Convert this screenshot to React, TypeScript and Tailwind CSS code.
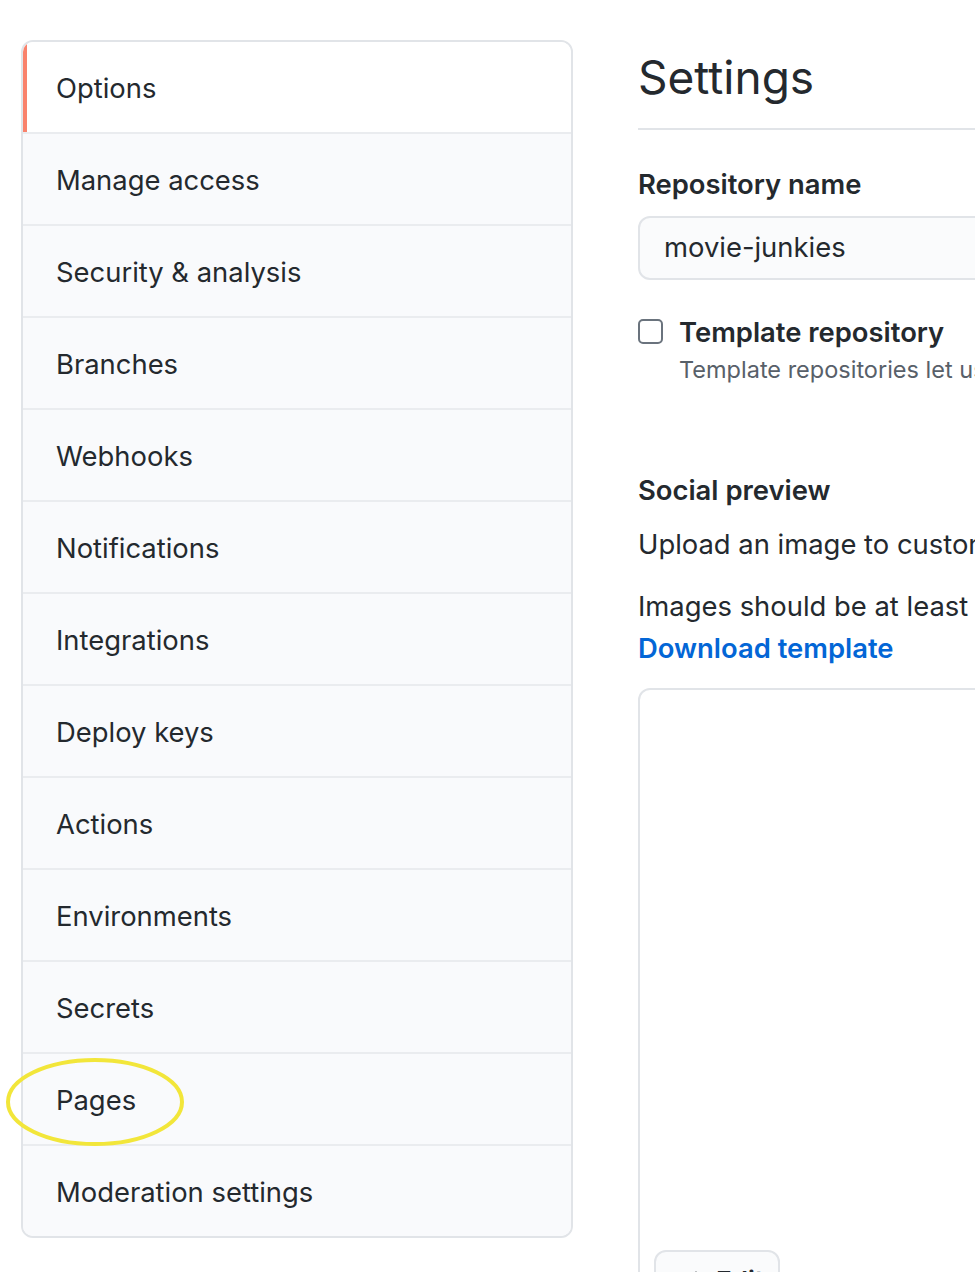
const items = [
  "Options",
  "Manage access",
  "Security & analysis",
  "Branches",
  "Webhooks",
  "Notifications",
  "Integrations",
  "Deploy keys",
  "Actions",
  "Environments",
  "Secrets",
  "Pages",
  "Moderation settings",
];

export default function App() {
  return (
    <div
      className="relative h-[1272px] w-[975px] overflow-hidden bg-white text-[#24292e]"
      style={{ fontFamily: "Inter, 'Liberation Sans', sans-serif" }}
    >
      <div className="flex items-start gap-[65px] pl-[21px] pt-[40px]">
        {/* Sidebar menu */}
        <nav className="w-[552px] shrink-0 overflow-hidden rounded-[12px] border-2 border-[#e1e4e8]">
          {items.map((label, i) => (
            <div
              key={label}
              className={
                i === 0
                  ? "relative flex h-[90px] items-center bg-white pl-[33px] pt-[4px] text-[27.4px]"
                  : "flex h-[92px] items-center border-t-2 border-[#eaecef] bg-[#f9fafc] pl-[33px] pt-[4px] text-[27.4px]"
              }
            >
              {i === 0 && <span className="absolute left-0 top-0 h-full w-[4px] bg-[#f9826c]" />}
              {label}
            </div>
          ))}
        </nav>

        {/* Main settings column */}
        <main className="w-[700px] shrink-0">
          <h1 className="border-b-2 border-[#e1e4e8] pt-[3px] pb-[17px] text-[46px] leading-[68px] font-normal">
            Settings
          </h1>

          <h2 className="mt-[34px] text-[27.4px] font-semibold leading-[40px]">Repository name</h2>
          <div className="mt-[12px] flex h-[64px] items-center rounded-[12px] border-2 border-[#e1e4e8] bg-[#fafbfc] pl-[24px] text-[27.4px]">
            movie-junkies
          </div>

          <div className="mt-[36px] flex gap-[16px]">
            <span className="mt-[3px] h-[25px] w-[25px] shrink-0 rounded-[5px] border-2 border-[#6a737d] bg-white" />
            <div>
              <div className="text-[27.4px] font-semibold leading-[32px]">Template repository</div>
              <div className="mt-[6px] whitespace-nowrap text-[23.5px] leading-[32px] text-[#586069]">
                Template repositories let users generate new repositories with the same directory structure and files.
              </div>
            </div>
          </div>

          <h2 className="mt-[84px] text-[27.4px] font-semibold leading-[40px]">Social preview</h2>
          <p className="mt-[14px] whitespace-nowrap text-[27.4px] leading-[40px]">
            Upload an image to customize your repository's social media preview.
          </p>
          <p className="mt-[22px] whitespace-nowrap text-[27.4px] leading-[40px]">
            Images should be at least 640×320px (1280×640px for best display).
          </p>
          <a className="block text-[27.4px] font-semibold leading-[44px] text-[#0366d6]">Download template</a>

          <div className="mt-[18px] h-[700px] rounded-[12px] border-2 border-[#e1e4e8] pl-[14px] pt-[560px]">
            <div className="flex h-[60px] w-[126px] items-center gap-[10px] rounded-[12px] border-2 border-[#e1e4e8] bg-[#fafbfc] pl-[30px] text-[26px] font-semibold">
              <svg width="20" height="22" viewBox="0 0 16 16" fill="#24292e" aria-hidden>
                <path d="M8 1l5 5H10v5H6V6H3l5-5zM2 13h12v2H2v-2z" />
              </svg>
              Edit
            </div>
          </div>
        </main>
      </div>

      {/* Yellow annotation ellipse */}
      <svg className="pointer-events-none absolute left-0 top-0" width="200" height="1160" aria-hidden>
        <ellipse cx="95" cy="1102" rx="87" ry="42" fill="none" stroke="#f2e63a" strokeWidth="4" />
      </svg>
    </div>
  );
}
